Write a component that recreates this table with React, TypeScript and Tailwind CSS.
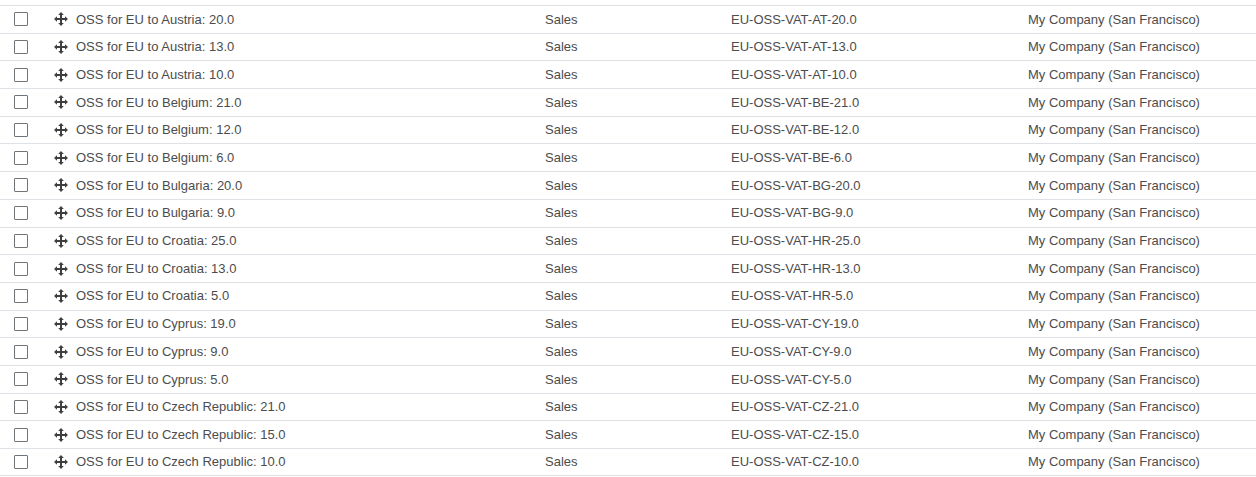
import React from 'react';

interface TaxRow {
  name: string;
  type: string;
  label: string;
  company: string;
}

const rates: Array<[string, string, number[]]> = [
  ['Austria', 'AT', [20, 13, 10]],
  ['Belgium', 'BE', [21, 12, 6]],
  ['Bulgaria', 'BG', [20, 9]],
  ['Croatia', 'HR', [25, 13, 5]],
  ['Cyprus', 'CY', [19, 9, 5]],
  ['Czech Republic', 'CZ', [21, 15, 10]],
];

const rows: TaxRow[] = rates.flatMap(([country, code, list]) =>
  list.map((r) => ({
    name: `OSS for EU to ${country}: ${r.toFixed(1)}`,
    type: 'Sales',
    label: `EU-OSS-VAT-${code}-${r.toFixed(1)}`,
    company: 'My Company (San Francisco)',
  }))
);

const MoveIcon = () => (
  <svg width="14" height="14" viewBox="0 0 14 14" className="text-[#3f3f3f]">
    <path d="M7 2v10M2 7h10" stroke="currentColor" strokeWidth="2" />
    <path d="M7 0L4.2 3h5.6zM7 14L4.2 11h5.6zM0 7L3 4.2v5.6zM14 7L11 4.2v5.6z" fill="currentColor" />
  </svg>
);

const App: React.FC = () => {
  return (
    <div className="w-[1256px] h-[477px] bg-white pt-[5px] font-['Liberation_Sans',Arial,sans-serif] text-[13px] text-[#4c4c4c]">
      {rows.map((row) => (
        <div
          key={row.label}
          className="grid grid-cols-[54px_491px_186px_297px_1fr] items-center h-[27.7px] border-t border-[#dee2e6] last:border-b"
        >
          <div className="pl-[14px] flex items-center">
            <span className="block w-[14px] h-[14px] border-[1.5px] border-[#6f7478] rounded-[1px] bg-white" />
          </div>
          <div className="flex items-center gap-[8px]">
            <MoveIcon />
            <span>{row.name}</span>
          </div>
          <div>{row.type}</div>
          <div>{row.label}</div>
          <div>{row.company}</div>
        </div>
      ))}
    </div>
  );
};

export default App;
